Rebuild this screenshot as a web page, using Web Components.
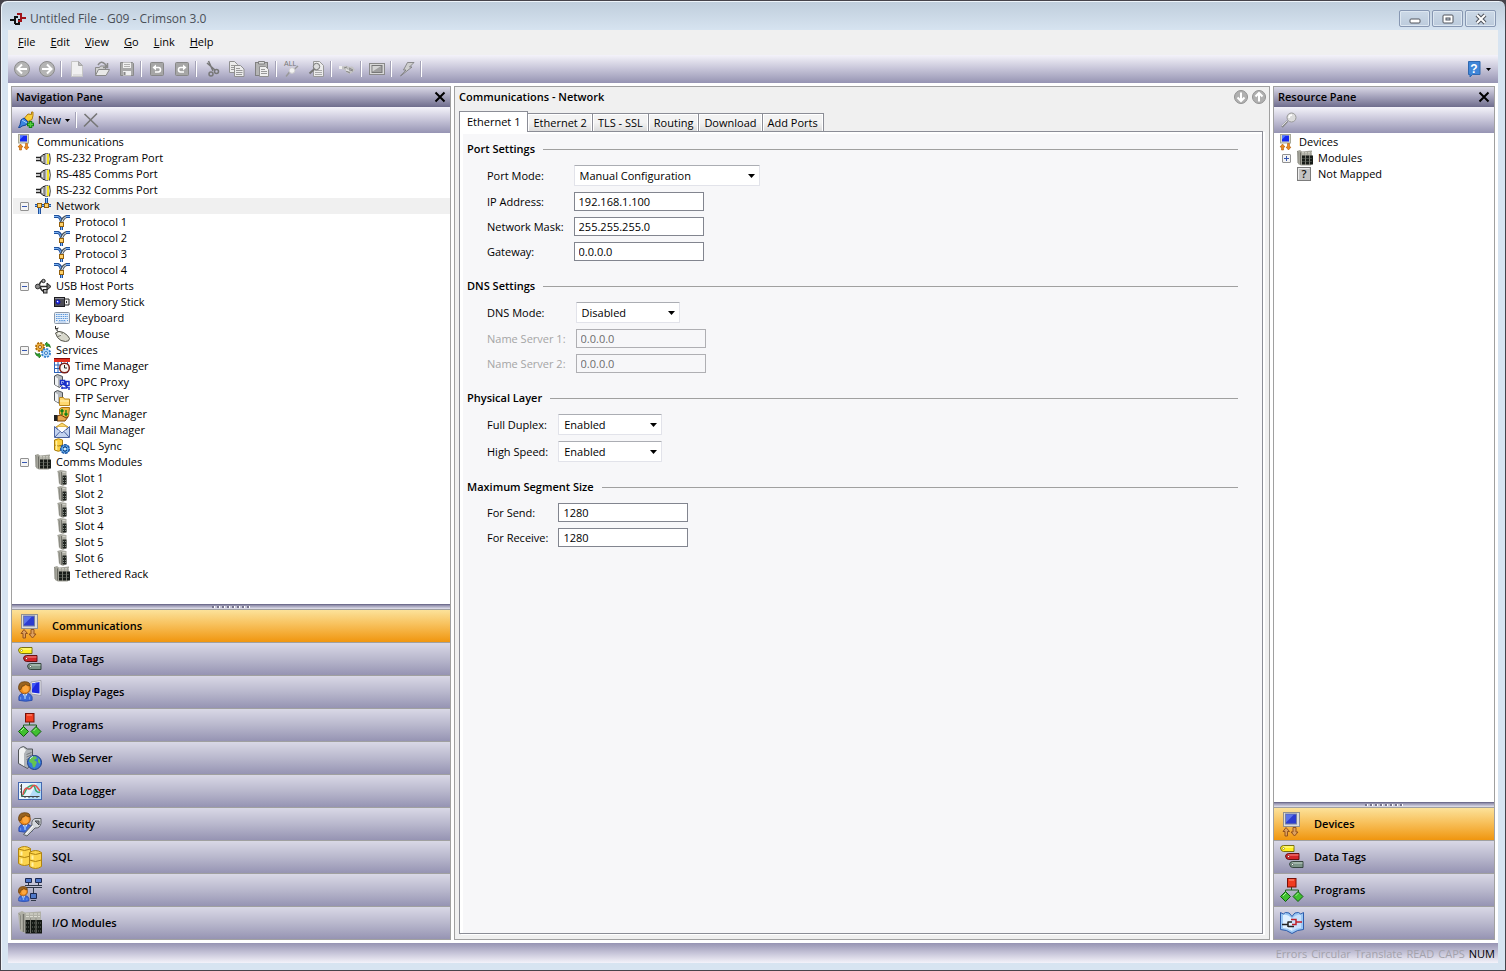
<!DOCTYPE html>
<html lang="en">
<head>
<meta charset="utf-8">
<title>Untitled File - G09 - Crimson 3.0</title>
<style>
  html, body {
    height: 100%;
  }
  body {
    margin: 0;
    background: #46434a;
    color: #000;
    font: 11px/16px "Open Sans", "Noto Sans", sans-serif;
    --edge: #a0a0a0;
    --bar: linear-gradient(#f4f3fa, #c6c4d8 50%, #9694b3);
    --category: linear-gradient(#d9d8e6, #b9b8cd 50%, #9694b3);
    --category-active: linear-gradient(#fce29a, #f7bd55 50%, #f0960f);
    --strong: 600;
  }
</style>
</head>
<body>
<app-window caption="Untitled File - G09 - Crimson 3.0">
  <menu-bar slot="menu">
    <menu-entry><u>F</u>ile</menu-entry>
    <menu-entry><u>E</u>dit</menu-entry>
    <menu-entry><u>V</u>iew</menu-entry>
    <menu-entry><u>G</u>o</menu-entry>
    <menu-entry><u>L</u>ink</menu-entry>
    <menu-entry><u>H</u>elp</menu-entry>
  </menu-bar>

  <tool-bar slot="toolbar">
    <tool-button icon="back" label="Back"></tool-button>
    <tool-button icon="forward" label="Forward"></tool-button>
    <tool-separator></tool-separator>
    <tool-button icon="new" label="New file"></tool-button>
    <tool-button icon="open" label="Open"></tool-button>
    <tool-button icon="save" label="Save"></tool-button>
    <tool-separator></tool-separator>
    <tool-button icon="undo" label="Undo"></tool-button>
    <tool-button icon="redo" label="Redo"></tool-button>
    <tool-separator></tool-separator>
    <tool-button icon="cut" label="Cut"></tool-button>
    <tool-button icon="copy" label="Copy"></tool-button>
    <tool-button icon="paste" label="Paste"></tool-button>
    <tool-separator></tool-separator>
    <tool-button icon="find-all" label="Find all"></tool-button>
    <tool-button icon="find-file" label="Find in file"></tool-button>
    <tool-separator></tool-separator>
    <tool-button icon="hand" label="Jump"></tool-button>
    <tool-separator></tool-separator>
    <tool-button icon="screen" label="Emulator"></tool-button>
    <tool-separator></tool-separator>
    <tool-button icon="bolt" label="Download"></tool-button>
    <tool-separator></tool-separator>
    <tool-button slot="end" icon="help" label="Help" drop></tool-button>
  </tool-bar>

  <side-pane slot="left" caption="Navigation Pane">
    <tool-button slot="tools" icon="plug" label="New item" drop>New</tool-button>
    <tool-separator slot="tools"></tool-separator>
    <tool-button slot="tools" icon="delete" label="Delete"></tool-button>

    <tree-node icon="comms">Communications</tree-node>
    <tree-node level="1" icon="port">RS-232 Program Port</tree-node>
    <tree-node level="1" icon="port">RS-485 Comms Port</tree-node>
    <tree-node level="1" icon="port">RS-232 Comms Port</tree-node>
    <tree-node level="1" icon="network" expander="minus" selected>Network</tree-node>
    <tree-node level="2" icon="protocol">Protocol 1</tree-node>
    <tree-node level="2" icon="protocol">Protocol 2</tree-node>
    <tree-node level="2" icon="protocol">Protocol 3</tree-node>
    <tree-node level="2" icon="protocol">Protocol 4</tree-node>
    <tree-node level="1" icon="usb" expander="minus">USB Host Ports</tree-node>
    <tree-node level="2" icon="stick">Memory Stick</tree-node>
    <tree-node level="2" icon="keyboard">Keyboard</tree-node>
    <tree-node level="2" icon="mouse">Mouse</tree-node>
    <tree-node level="1" icon="services" expander="minus">Services</tree-node>
    <tree-node level="2" icon="time">Time Manager</tree-node>
    <tree-node level="2" icon="opc">OPC Proxy</tree-node>
    <tree-node level="2" icon="ftp">FTP Server</tree-node>
    <tree-node level="2" icon="sync">Sync Manager</tree-node>
    <tree-node level="2" icon="mail">Mail Manager</tree-node>
    <tree-node level="2" icon="sql-sync">SQL Sync</tree-node>
    <tree-node level="1" icon="rack" expander="minus">Comms Modules</tree-node>
    <tree-node level="2" icon="module">Slot 1</tree-node>
    <tree-node level="2" icon="module">Slot 2</tree-node>
    <tree-node level="2" icon="module">Slot 3</tree-node>
    <tree-node level="2" icon="module">Slot 4</tree-node>
    <tree-node level="2" icon="module">Slot 5</tree-node>
    <tree-node level="2" icon="module">Slot 6</tree-node>
    <tree-node level="2" icon="rack">Tethered Rack</tree-node>

    <category-button slot="categories" icon="big-comms" active>Communications</category-button>
    <category-button slot="categories" icon="big-tags">Data Tags</category-button>
    <category-button slot="categories" icon="big-display">Display Pages</category-button>
    <category-button slot="categories" icon="big-programs">Programs</category-button>
    <category-button slot="categories" icon="big-web">Web Server</category-button>
    <category-button slot="categories" icon="big-logger">Data Logger</category-button>
    <category-button slot="categories" icon="big-security">Security</category-button>
    <category-button slot="categories" icon="big-sql">SQL</category-button>
    <category-button slot="categories" icon="big-control">Control</category-button>
    <category-button slot="categories" icon="big-rack">I/O Modules</category-button>
  </side-pane>

  <editor-pane slot="center" caption="Communications - Network">
    <editor-tab slot="tabs" active>Ethernet 1</editor-tab>
    <editor-tab slot="tabs">Ethernet 2</editor-tab>
    <editor-tab slot="tabs">TLS - SSL</editor-tab>
    <editor-tab slot="tabs">Routing</editor-tab>
    <editor-tab slot="tabs">Download</editor-tab>
    <editor-tab slot="tabs">Add Ports</editor-tab>

    <settings-group caption="Port Settings">
      <select-field label="Port Mode:" value="Manual Configuration" wide></select-field>
      <text-field label="IP Address:" value="192.168.1.100"></text-field>
      <text-field label="Network Mask:" value="255.255.255.0"></text-field>
      <text-field label="Gateway:" value="0.0.0.0"></text-field>
    </settings-group>
    <settings-group caption="DNS Settings">
      <select-field label="DNS Mode:" value="Disabled"></select-field>
      <text-field label="Name Server 1:" value="0.0.0.0" disabled></text-field>
      <text-field label="Name Server 2:" value="0.0.0.0" disabled></text-field>
    </settings-group>
    <settings-group caption="Physical Layer">
      <select-field label="Full Duplex:" value="Enabled"></select-field>
      <select-field label="High Speed:" value="Enabled"></select-field>
    </settings-group>
    <settings-group caption="Maximum Segment Size">
      <text-field label="For Send:" value="1280"></text-field>
      <text-field label="For Receive:" value="1280"></text-field>
    </settings-group>
  </editor-pane>

  <side-pane slot="right" caption="Resource Pane">
    <tool-button slot="tools" icon="search" label="Search"></tool-button>

    <tree-node icon="comms">Devices</tree-node>
    <tree-node level="1" icon="rack" expander="plus">Modules</tree-node>
    <tree-node level="1" icon="unknown">Not Mapped</tree-node>

    <category-button slot="categories" icon="big-comms" active>Devices</category-button>
    <category-button slot="categories" icon="big-tags">Data Tags</category-button>
    <category-button slot="categories" icon="big-programs">Programs</category-button>
    <category-button slot="categories" icon="big-system">System</category-button>
  </side-pane>

  <status-bar slot="status">
    <span>Errors</span>
    <span>Circular</span>
    <span>Translate</span>
    <span>READ</span>
    <span>CAPS</span>
    <span class="on">NUM</span>
  </status-bar>
</app-window>

<script>
(() => {
  const PERSON = `
    <path d="M1 22v-4q1-3 4-4h6q4 1 5 4v4q-7 2-15 0z" fill="#3c6ad8" stroke="#2748a8"/>
    <path d="M5 13.500l3 6 3-6z" fill="#e8f0ff"/><path d="M8 14.500v6" stroke="#80b0f0" stroke-width="2"/>
    <path d="M3 18v3M13 18v3" stroke="#7ca4f0"/>
    <circle cx="7.500" cy="8" r="6.500" fill="#f08c1c" stroke="#8a4a10"/><ellipse cx="8.500" cy="9" rx="3.500" ry="3.500" fill="#fca840"/>
    <path d="M1 9.500Q-.500 1 7 .800T13.500 5.500q-3 0-5-2-1 2.500-4 2.500-.500 2-1.500 4z" fill="#9a6420" stroke="#5e3a0c" stroke-width=".800"/>`;

  const TOWER = `
    <path d="M.500 4Q2 1 5.500.500l4 2.500h5v13l-5 6.500-9-5z" fill="#aeb2b6" stroke="#505458"/>
    <path d="M1 4.500Q2 1.500 5.500 1.500L8 4 6 8v12L1 17z" fill="#f0f1f2"/>
    <path d="M6 8l3-4h5v12l-5 5.500L6 20z" fill="#b0b4b8"/>
    <path d="M8.500 8.500l5-2M8.500 11l5-2M8.500 13.500l5-2" stroke="#74787c"/>`;

  const tag = (x, y, fill, edge, shine) => `
    <path d="M${x} ${y + 3}q.500-2.500 3-2.500h10.500v6H${x + 3}q-2.500 0-3-3.500z" fill="${fill}" stroke="${edge}" stroke-width=".900"/>
    <path d="M${x + 3} ${y + 2}h10" stroke="${shine}"/><circle cx="${x + 3}" cy="${y + 3.5}" r="1" fill="#fff" stroke="${edge}" stroke-width=".500"/>`;

  // small icons sit on a 16 unit grid, category icons on a 24 unit grid
  const ICONS = {
    'logo': `<path d="M0 9h5M5 13h4V8M5 13V6h3" stroke="#111" stroke-width="2"/>
      <path d="M7 3h4v7H8M11 7h5" stroke="#a11218" stroke-width="2"/>`,
    'back': `<circle cx="8" cy="8" r="7.500" fill="#b4b4b4" stroke="#8c8c8c"/>
      <path d="M13 8H4M8 3.500L3.500 8 8 12.500" stroke="#fff" stroke-width="2"/>`,
    'forward': `<circle cx="8" cy="8" r="7.500" fill="#b4b4b4" stroke="#8c8c8c"/>
      <path d="M3 8h9M8 3.500l4.500 4.500L8 12.500" stroke="#fff" stroke-width="2"/>`,
    'down': `<circle cx="8" cy="8" r="6.500" fill="#b0b0b0" stroke="#929292"/>
      <path d="M8 3.500v8M4.500 8.500L8 12l3.500-3.500" stroke="#fff" stroke-width="2"/>`,
    'up': `<circle cx="8" cy="8" r="6.500" fill="#b0b0b0" stroke="#929292"/>
      <path d="M8 12.500v-8M4.500 7.500L8 4l3.500 3.500" stroke="#fff" stroke-width="2"/>`,
    'new': `<path d="M2.500.500h7l4 4v11h-11z" fill="#f0f0f0" stroke="#c6c6c6"/>
      <path d="M9.500.500v4h4z" fill="#bdbdbd" stroke="#a8a8a8"/><path d="M4 14h9" stroke="#ccc"/>`,
    'open': `<path d="M1.500 14.500v-8h4l1-1.500h5v4" fill="#d0d0d0" stroke="#8a8a8a"/>
      <path d="M1.500 14.500l3-6h11l-3.500 6z" fill="#e8e8e8" stroke="#8a8a8a"/>
      <path d="M4 4q3-5 7-1l2 3M13.500 2v4.500H9" stroke="#8a8a8a" stroke-width="1.500"/>`,
    'save': `<path d="M1.500 1.500h12l1 1v12h-13z" fill="#a9a9a9" stroke="#8a8a8a"/>
      <path d="M4 1.500h8v5.500H4zM4 10h8v4.500H4z" fill="#f0f0f0"/>
      <path d="M5 3.500h6M5 5.500h6" stroke="#b0b0b0"/><path d="M5.500 11v3" stroke="#888" stroke-width="2"/>`,
    'undo': `<rect x="1.500" y="1.500" width="13" height="13" rx="1" fill="#a6a6a6" stroke="#888"/>
      <path d="M5 6.500h4.500q2 0 2 2.200T9.500 11H6" stroke="#fff" stroke-width="1.600"/>
      <path d="M3.500 6.500L7 3.500v6z" fill="#fff"/>`,
    'redo': `<rect x="1.500" y="1.500" width="13" height="13" rx="1" fill="#a6a6a6" stroke="#888"/>
      <path d="M11 6.500H6.500q-2 0-2 2.200T6.500 11H10" stroke="#fff" stroke-width="1.600"/>
      <path d="M12.500 6.500L9 3.500v6z" fill="#fff"/>`,
    'cut': `<path d="M4.500 0L9 10M3 2l8 7" stroke="#777" stroke-width="1.500"/>
      <circle cx="7" cy="13" r="2" stroke="#777" stroke-width="1.500"/>
      <circle cx="12.500" cy="10.500" r="2" stroke="#777" stroke-width="1.500"/>`,
    'copy': `<path d="M.500.500h5l3 3v8h-8z" fill="#ececec" stroke="#909090"/><path d="M2 4.500h4M2 6.500h4M2 8.500h4" stroke="#999"/>
      <path d="M5.500 4.500h6l3.500 3.500v7.500H5.500z" fill="#ececec" stroke="#909090"/><path d="M7 7.500h4M7 9.500h6.500M7 11.500h6.500M7 13.500h6" stroke="#999"/>`,
    'paste': `<rect x="1.500" y="1.500" width="12" height="13" fill="#b4b4b4" stroke="#808080"/>
      <path d="M4.500 3V.500h6V3z" fill="#ddd" stroke="#808080"/>
      <path d="M5.500 5.500h6l3 3v7h-9z" fill="#efefef" stroke="#909090"/><path d="M7 8.500h4M7 10.500h6M7 12.500h6" stroke="#999"/>`,
    'find-all': `<text x="0" y="5" font-size="7" font-family="Liberation Sans, sans-serif" fill="#777">ALL</text>
      <path d="M14 5l-4.500 4M2 15.500l4-5" stroke="#999" stroke-width="1.500"/><circle cx="8" cy="9.500" r="2.800" fill="#f2f2f2" stroke="#d0d0d0"/>`,
    'find-file': `<path d="M4.500.500h6l4 4v11h-10z" fill="#ececec" stroke="#999"/><path d="M6 9.500h7M6 11.500h7M6 13.500h7" stroke="#aaa"/>
      <circle cx="7.500" cy="5.500" r="3.200" fill="#ddd" stroke="#777"/><path d="M5.500 8L.500 12.500" stroke="#777" stroke-width="2"/>`,
    'hand': `<path d="M0 5l4 .500Q7 4 10 6q3-1 4 0l2 3-2 2-3 2-3-1-2-3-4-1-2-2z" fill="#c4c4c4"/>
      <path d="M0 5h3v3H0z" fill="#f0f0f0"/><path d="M5 7l3-1M8 8l6 2M7 10l4 2M10 7l4 2" stroke="#868686"/><path d="M7 9h3" stroke="#fff"/>`,
    'screen': `<rect x=".500" y="2.500" width="15" height="11" fill="#d8d8d8" stroke="#8a8a8a"/>
      <rect x="3" y="4.500" width="10" height="7" fill="#a0a0a0" stroke="#777"/><path d="M3.500 10.500L12 5H3.500z" fill="#d4d4d4"/>`,
    'bolt': `<path d="M8.500 1.500h6.500l-4.500 4.500H13L1.500 15 7 9H4.500z" fill="#cfcfcf" stroke="#777" stroke-width=".800"/>`,
    'help': `<path d="M3 .500h11v13H6.500L4 16v-2.500H2.500V.500z" fill="#3f86d8" stroke="#2f68b0"/>
      <text x="8" y="12" text-anchor="middle" font-size="12" font-weight="700" font-family="Liberation Sans, sans-serif" fill="#fff">?</text>`,
    'plug': `<path d="M6.500 6l3.500-4 3.500.500V0H15v3.500l-1 4-4 2z" fill="#f8cf3a" stroke="#b07a10"/>
      <path d="M2 13l1-5 3-2 4 4-2 3-4 1-2 1.500H.500z" fill="#3c86e0" stroke="#14459a"/>
      <path d="M4 8l5 3" stroke="#a6d0ff"/><path d="M12.500 9v7M9 12.500h7" stroke="#128012" stroke-width="3.500"/><path d="M12.500 10v5M10 12.500h5" stroke="#55d040" stroke-width="1.500"/>`,
    'delete': `<path d="M1.500 2l13.500 13M14 1.500L1 14.500" stroke="#777" stroke-width="1.600"/>`,
    'search': `<path d="M1 15l5.500-6" stroke="#8a8a8a" stroke-width="2"/><path d="M1 14l5-5" stroke="#ddd"/>
      <circle cx="10.500" cy="5.500" r="4.500" fill="#dcdcdc" stroke="#999"/><path d="M8 6q0-3 3-3" stroke="#fff" stroke-width="1.500"/>`,
    'comms': `<rect x="2.500" y=".500" width="10" height="8.500" fill="#d8d8c8" stroke="#a8a898"/>
      <rect x="4" y="1.500" width="7" height="6" fill="#1428f0"/><path d="M4 1.500h4l-4 4z" fill="#5078ff"/>
      <path d="M4.500 10L2 13h1.500v3h2v-3H7zM10.500 16L8 13h1.500v-3.500h2V13H13z" fill="#f08a1c" stroke="#b05a08" stroke-width=".600"/>`,
    'port': `<path d="M1 7.500h5M1 10.500h5" stroke="#222" stroke-width="1.500"/>
      <path d="M5.500 7L8 4.500h2.500v9H8L5.500 11z" fill="#a0a0a0" stroke="#222"/><path d="M7.500 7v4" stroke="#eee"/>
      <rect x="10" y="3.500" width="3" height="11" fill="#d4d4d4" stroke="#555" stroke-width=".700"/>
      <path d="M13 4v10" stroke="#f4e420" stroke-width="2"/><path d="M14.500 3.500q1.500 5.500 0 11" stroke="#333"/>`,
    'network': `<path d="M0 7.500h16M4.500 8v8M11.500 0v7" stroke="#1e4f9c" stroke-width="3"/>
      <path d="M0 7.500h16M4.500 8v8M11.500 0v7" stroke="#7fb6f4"/>
      <rect x="2.500" y="5.500" width="4" height="4" fill="#ffd26a" stroke="#94600c"/><rect x="9.500" y="5.500" width="4" height="4" fill="#ffd26a" stroke="#94600c"/>`,
    'protocol': `<path d="M0 2.500h4q3 1 3.500 6" stroke="#1e4f9c" stroke-width="3"/><path d="M0 2.500h4q3 1 3.500 6" stroke="#7fb6f4"/>
      <path d="M16 2.500h-3.500Q9 3.500 7.500 8.500" stroke="#4a545e" stroke-width="3"/><path d="M16 2.500h-3.500Q9 3.500 7.500 8.500" stroke="#dfe8ee"/>
      <path d="M12 2.500h4" stroke="#1e4f9c" stroke-width="3"/><path d="M12 2.500h4" stroke="#7fb6f4"/>
      <path d="M7.500 12v4" stroke="#1e4f9c" stroke-width="3"/><path d="M7.500 12v4" stroke="#7fb6f4"/>
      <rect x="5.500" y="8.500" width="4" height="4" fill="#ffd26a" stroke="#94600c"/>`,
    'usb': `<path d="M2 8.500h11M4 8q1-5 4-5M5 9q2 5 5 4" stroke="#2c2c2c" stroke-width="1.700"/>
      <path d="M12 5l4 3.500-4 3.500z" fill="#777" stroke="#222"/><circle cx="2.800" cy="8.500" r="2.400" fill="#8a8a8a" stroke="#333"/>
      <circle cx="8.500" cy="3" r="1.700" fill="#aaa" stroke="#222"/><rect x="8.500" y="11.500" width="3.500" height="3.500" fill="#aaa" stroke="#222"/>`,
    'stick': `<rect x=".500" y="3.500" width="10" height="9" fill="#4c4c54" stroke="#1c1c20"/><path d="M1 4.500h9" stroke="#8a8a92"/>
      <circle cx="4" cy="8" r="2" fill="#3344ff" stroke="#1010a0"/><circle cx="3.500" cy="7.500" r=".700" fill="#fff"/>
      <path d="M10.500 5h4.500v6h-4.500z" fill="#f0f0f0" stroke="#222"/><path d="M12.500 7v2" stroke="#333"/>`,
    'keyboard': `<rect x=".500" y="2.500" width="15" height="11" rx="1" fill="#e4eefa" stroke="#8c98a8"/>
      <path d="M2 4.500h12M2 6.500h12M2 8.500h12M2 10.500h2M5 10.500h7M13 10.500h1" stroke="#5c98dc" stroke-dasharray="1.500 .750"/><path d="M4 12h8" stroke="#a8c4e8"/>`,
    'mouse': `<path d="M1.500 0v3l3-1M3 2v3l3 1" stroke="#333"/>
      <path d="M1.500 7q3-3 8-.500 5 3 6 6 0 3-4 3-5 0-8-4z" fill="#d8d8cc" stroke="#55554c"/><path d="M3 11q5-1 6-5" stroke="#77776c"/><path d="M4 7l4 2" stroke="#fff"/>`,
    'services': `<circle cx="5" cy="5" r="4" fill="#f0b040" stroke="#b06c08" stroke-dasharray="2 1.100" stroke-width="2"/><circle cx="5" cy="5" r="3" fill="#f0b040"/><circle cx="5" cy="5" r="1.500" fill="#fff" stroke="#a06008"/>
      <circle cx="11" cy="11" r="4" fill="#b4dcfc" stroke="#3a84d0" stroke-dasharray="2 1.100" stroke-width="2"/><circle cx="11" cy="11" r="3" fill="#b4dcfc"/><circle cx="11" cy="11" r="1.500" fill="#fff" stroke="#3a7cc4"/>
      <path d="M10 2l2-2v1.500q3 0 3.500 4-2-2-3.500-1.500V5zM6 14l-2 2v-1.500q-3 0-4-4 2 2 4 1.500V11z" fill="#30a830" stroke="#106010" stroke-width=".600"/>`,
    'time': `<rect x=".500" y="3.500" width="13" height="11" fill="#fff" stroke="#2a62b8"/><path d="M1 7h12M1 10.500h12M4 4v10M7.500 4v10" stroke="#2a62b8"/>
      <rect x="0" y="0" width="16" height="4" fill="#e03020"/><path d="M0 .500h16" stroke="#8a0c08"/>
      <circle cx="10.500" cy="10" r="4.800" fill="#f8f4f0" stroke="#7c1c14" stroke-width="1.500"/><path d="M10.500 7v3h2.500" stroke="#222"/>`,
    'opc': `<path d="M.500 2l3-1.500 5 2v8l-3 3-5-3z" fill="#b4b8bc" stroke="#505458"/><path d="M1 2.500l3 2v8L1 10.500z" fill="#f0f2f4"/>
      <path d="M6.500 6.500h4v4h-4zM12 7.500h3v4h-3zM8 12.500v2.500M15 13v3" fill="#fff" stroke="#1830c8" stroke-width="1.500"/><path d="M8 8l6 6M8 14h5" stroke="#1830c8" stroke-width="1.500"/>`,
    'ftp': `<path d="M.500 2l3-1.500 5 2v8l-3 3-5-3z" fill="#b4b8bc" stroke="#505458"/><path d="M1 2.500l3 2v8L1 10.500z" fill="#f0f2f4"/>
      <path d="M5.500 15.500v-8h4l1 1.500h5v6.500z" fill="#ffd870" stroke="#b8861c"/><path d="M6 11h9" stroke="#fff0b8"/>`,
    'sync': `<path d="M5.500 8V3l2-1.500h8l-1 9-5 1.500z" fill="#f0b840" stroke="#a87010"/><path d="M8 9V4M6.500 5.500L8 3.500l1.500 2M12 4v5M10.500 7.500l1.500 2 1.500-2" stroke="#108018" stroke-width="1.300"/>
      <path d="M3 10l4-1 5 3 2-1-3 4H3z" fill="#e8a850" stroke="#7a4008"/><rect x="0" y="9" width="3.500" height="6" fill="#222"/>`,
    'mail': `<path d="M2 5h12L8 1z" fill="#fbd870" stroke="#c89c30"/><path d="M.500 4.500v11h15v-11l-4 4H5z" fill="#c4d4f0" stroke="#4c64a0"/>
      <path d="M4 5h8v4l-4 2-4-2z" fill="#fff"/><path d="M1 5l7 6 7-6M1 15l5-5.500M15 15l-5-5.500" stroke="#4c64a0"/>`,
    'sql-sync': `<path d="M.500 2v10q3.500 2.500 8 0V2q-4-2.500-8 0z" fill="#fbd040" stroke="#a87c10"/><path d="M.500 7q4 2 8 0" stroke="#a87c10"/><path d="M2.500 3v9" stroke="#fff0a0" stroke-width="1.500"/>
      <circle cx="11" cy="11" r="4.300" fill="#60a8e8" stroke="#1c58a8" stroke-dasharray="3 .700" stroke-width="1.500"/><path d="M9 10q2-3 4 0M13 12q-2 3-4 0" stroke="#08306c"/><circle cx="11" cy="11" r="1" fill="#fff"/>`,
    'rack': `<path d="M0 1l3-1 2 1.500 10-1V14l-1.500 1.500H4L1 14z" fill="#a4a49a"/><path d="M3.500 2.500v12" stroke="#6c6c64"/><path d="M0 1l1 1v11" stroke="#8c8c84"/>
      <path d="M5 2.500h10M5 4h10" stroke="#c8c8be" stroke-dasharray="2 1"/><rect x="5" y="5.500" width="11" height="9" fill="#181c18"/>
      <path d="M8.500 5v10M12.500 5v10" stroke="#94948a" stroke-width=".800"/><path d="M5.500 8.500h10M5.500 11.500h10" stroke="#6c746c" stroke-dasharray="1 1"/>`,
    'module': `<path d="M3.500 1l3-1 6 1v13L9 16l-4-2z" fill="#acaca2"/><path d="M7.500 2v13" stroke="#74746c"/><path d="M4 1.500L5.500 3v10" stroke="#8c8c84"/>
      <path d="M8.500 2.500h3" stroke="#d0d0c8"/><rect x="8.500" y="5.500" width="4" height="9" fill="#202420"/><path d="M9 7.500h3M9 10.500h3M9 12.500h3" stroke="#808880" stroke-dasharray="1 1"/>`,
    'unknown': `<rect x=".500" y="1.500" width="13" height="13" fill="#c4c4c4" stroke="#7c7c7c"/><path d="M1.500 13.500v-11h11" stroke="#eee"/>
      <text x="7" y="12" text-anchor="middle" font-size="11" font-weight="600" fill="#111">?</text>`,

    'big-comms': `<rect x="3.500" y=".500" width="16" height="14" fill="#dcdcdc" stroke="#909090"/><rect x="5.500" y="2" width="11" height="10" fill="#2c3cd0" stroke="#7880a0"/>
      <path d="M6 2.500h8l-8 8z" fill="#5c74e8"/><path d="M6 15.500l-3 4h2v4.500h2.500v-4.500h2zM14.500 24l3.500-4h-2v-4.500h-3V20h-2z" fill="#dca060" stroke="#94521c"/>`,
    'big-tags': `${tag(.5, 0, '#fff020', '#6c6400', '#fffcb0')}${tag(5.5, 8, '#d42428', '#5c0808', '#f88c88')}${tag(9.5, 16, '#7c9488', '#2c3c34', '#c4d4cc')}`,
    'big-display': `<path d="M13 2l10-1.500v15L13 14z" fill="#f0f0f4" stroke="#a0a0ac"/><path d="M14 3.500l7.500-1.500v11.500L14 12.500z" fill="#1c28e0"/><path d="M14 3.500l5-1-5 7z" fill="#4058f4"/>
      <g transform="translate(0 1) scale(.88)">${PERSON}</g>`,
    'big-programs': `<path d="M11.500 9v3M5.500 15v-3h13v3" stroke="#206020"/><rect x="7.500" y=".500" width="8.500" height="8.500" fill="#f03c20" stroke="#781008"/><path d="M9 2h5" stroke="#ff9880"/>
      <path d="M5.500 13.500l5 5-5 5-5-5zM18 13.500l5 5-5 5-5-5z" fill="#40c030" stroke="#105c10"/><path d="M3 18l3-3M15.500 18l3-3" stroke="#a8f098"/>`,
    'big-web': `${TOWER}<circle cx="16.500" cy="16.500" r="7" fill="#3878d8" stroke="#1c3c84"/>
      <path d="M12 12q3-2.500 6-1.500l1 2-3 1.500 3 2-2 5-2 .500-1-4-3-2zM20 12l2 2v4l-2-2z" fill="#64c450"/><path d="M12 13q1-2 3-2.500" stroke="#d8f0ff"/>`,
    'big-logger': `<rect x=".500" y="3.500" width="23" height="17" fill="#e8f4fc" stroke="#4468b0"/><path d="M10 20L19 4h4v16z" fill="#b4dcf8"/>
      <path d="M3.500 5v12.500h18M2 7h2M2 10h2M2 13h2M7 17v2M11 17v2M15 17v2M19 17v2" stroke="#444"/>
      <path d="M4 17q3-3 4-6 1-3 4-4 4-2 5 2 1 5 5 4" stroke="#38a870" stroke-width="1.500"/><path d="M5 16q1-7 4-7 2 2 4 0 3-5 6-1l3 4" stroke="#e05048" stroke-width="1.500"/>`,
    'big-security': `<g transform="scale(.88)">${PERSON}</g><path d="M5.500 22.500L14 13q-1-5 3-6.500h6v5q-1 5-6 4.500l-8 8z" fill="#d4d8dc" stroke="#5c6064"/>
      <path d="M17 9h4v4z" fill="#8c9094" stroke="#44484c"/><path d="M8 22l7-8" stroke="#fff"/>`,
    'big-sql': `<path d="M.500 3.500q6-4 12 0v15q-6 4-12 0z" fill="#fcd44c" stroke="#b08410"/><path d="M.500 4q6 3 12 0M.500 11q6 3 12 0" stroke="#b08410"/>
      <path d="M3.500 6.500v4M3.500 13.500v5" stroke="#fff2a8" stroke-width="2"/>
      <path d="M11.500 7.500q6-4 12 0v14q-6 4-12 0z" fill="#fcd44c" stroke="#b08410"/><path d="M11.500 8q6 3 12 0M11.500 15q6 3 12 0" stroke="#b08410"/>
      <path d="M14.500 10.500v4M14.500 17.500v4" stroke="#fff2a8" stroke-width="2"/>`,
    'big-control': `<path d="M10.500 5v3M20.500 5v3M7 7.500h17M7 9.500h17M15.500 9v6M12 19.500h7" stroke="#303848"/>
      <path d="M7.500.500h6v4h-6zM17.500.500h6v4h-6zM12.500 15.500h6v5h-6z" fill="#5078c8" stroke="#1c2850"/><path d="M13 22.500h5" stroke="#303848"/>
      <g transform="translate(0 8) scale(.68)">${PERSON}</g>`,
    'big-rack': `<path d="M0 2l4-2 3 1.500L23 .500V20l-1 2H7l-5-2z" fill="#b0b0a6"/><path d="M5.500 3v18" stroke="#74746c" stroke-width="1.500"/><path d="M1 2.500l1.500 2v14" stroke="#8c8c84"/>
      <path d="M8 3h14M8 5.500h14" stroke="#dcdcd2" stroke-dasharray="3 1"/><rect x="7.500" y="9" width="16.500" height="13.500" fill="#141814"/>
      <path d="M12.500 7v15M18 7v15" stroke="#8c8c82" stroke-width=".800"/><path d="M8 12h16M8 16h16M8 20h16" stroke="#687068" stroke-dasharray="1 1"/>`,
    'big-system': `<path d="M.500 1.500q3 3 5 0 4-1 6.500 4 2.500-5 6.500-4 2 3 5 0v17q-6 0-11.500 4-5.500-4-11.500-4z" fill="#9cc8f4" stroke="#2c5cac"/>
      <path d="M3 4q5-1 9 4v12q-4-3-9-3z" fill="#e0f0ff"/><path d="M12 8q4-5 9-4v13q-5 0-9 3z" fill="#c8e0fc"/>
      <path d="M2 13.500h6M8 11h4M8 15.500h6M8 10.500v5.500" stroke="#222" stroke-width="1.500"/><path d="M11 8.500h5v5h-4M16 11h6" stroke="#c02028" stroke-width="1.500"/>`,
  };

  const drawIcon = (name) => {
    const units = name.startsWith('big-') ? 24 : 16;
    return `<svg width="${units}" height="${units}" viewBox="0 0 ${units} ${units}" fill="none" aria-hidden="true">${ICONS[name]}</svg>`;
  };

  const ARROW = '<svg class="arrow" width="7" height="4" viewBox="0 0 7 4" aria-hidden="true"><path d="M0 0h7L3.500 4z"/></svg>';
  const CLOSE = '<svg width="12" height="12" viewBox="0 0 12 12" aria-hidden="true"><path d="M1.500 1.500l9 9M10.500 1.500l-9 9" stroke="#000" stroke-width="2"/></svg>';

  const BASE = `
    *, *::after, *::before {
      box-sizing: border-box;
    }
    :host {
      box-sizing: border-box;
    }
    svg {
      display: block;
      flex: none;
      overflow: visible;
    }
    button, input, select {
      font: inherit;
      color: inherit;
      margin: 0;
    }
    h1, h2 {
      font: inherit;
      margin: 0;
    }
  `;

  class BaseElement extends HTMLElement {
    constructor() {
      super();
      this.attachShadow({ mode: 'open' });
    }

    connectedCallback() {
      this.shadowRoot.innerHTML = `<style>${BASE}${this.styles()}</style>${this.markup()}`;
    }

    attr(name) {
      return this.getAttribute(name) || '';
    }
  }

  class AppWindow extends BaseElement {
    styles() {
      return `
        :host {
          display: flex;
          flex-direction: column;
          height: 100vh;
          min-height: 760px;
          padding: 0 7px 7px;
          border: 1px solid #46434a;
          border-radius: 7px 7px 0 0;
          background: linear-gradient(#bfcddb, #d7e4f1 30px);
          box-shadow: inset 1px 1px #eef4fa;
        }
        header {
          display: flex;
          align-items: center;
          height: 29px;
          padding: 6px 2px 0;
          flex: none;
        }
        h1 {
          flex: 1;
          margin-left: 4px;
          color: #4a5058;
          font-size: 12px;
        }
        .controls {
          display: flex;
          gap: 2px;
        }
        .controls button {
          display: grid;
          place-items: center;
          width: 31px;
          height: 17px;
          padding: 0;
          border: 1px solid #8797b2;
          border-radius: 2px;
          background: linear-gradient(#ccd9e7, #bccbdc);
          box-shadow: inset 0 0 0 1px #dde7f1;
        }
        .client {
          flex: 1;
          display: flex;
          flex-direction: column;
          min-height: 0;
          background: #fff;
        }
        main {
          flex: 1;
          display: grid;
          grid-template-columns: 440px minmax(0, 1fr) 222px;
          gap: 3px;
          min-height: 0;
          padding: 3px;
        }
      `;
    }

    markup() {
      return `
        <header>
          ${drawIcon('logo')}
          <h1>${this.attr('caption')}</h1>
          <div class="controls">
            <button aria-label="Minimize"><svg width="12" height="10"><rect x="1" y="5" width="10" height="4" rx="1" fill="#fff" stroke="#50545c"/></svg></button>
            <button aria-label="Restore"><svg width="12" height="10"><rect x="1" y="1" width="10" height="8" rx="1" fill="#fff" stroke="#50545c"/><rect x="4" y="4" width="4" height="2" fill="#c4d0de" stroke="#50545c"/></svg></button>
            <button aria-label="Close"><svg width="12" height="10"><path d="M2 1l8 8M10 1L2 9" stroke="#50545c" stroke-width="4"/><path d="M2 1l8 8M10 1L2 9" stroke="#fff" stroke-width="2"/></svg></button>
          </div>
        </header>
        <div class="client">
          <slot name="menu"></slot>
          <slot name="toolbar"></slot>
          <main>
            <slot name="left"></slot>
            <slot name="center"></slot>
            <slot name="right"></slot>
          </main>
          <slot name="status"></slot>
        </div>
      `;
    }
  }

  class MenuBar extends BaseElement {
    styles() {
      return `
        :host {
          display: flex;
          align-items: center;
          gap: 1px;
          height: 25px;
          padding: 0 3px 2px;
          background: #f0f0f0;
        }
      `;
    }

    markup() {
      return '<slot></slot>';
    }
  }

  class MenuEntry extends BaseElement {
    styles() {
      return `
        :host {
          display: block;
        }
        button {
          padding: 0 7px;
          border: 0;
          background: none;
        }
      `;
    }

    markup() {
      return '<button><slot></slot></button>';
    }
  }

  class ToolBar extends BaseElement {
    styles() {
      return `
        :host {
          display: flex;
          align-items: center;
          height: 28px;
          padding: 0 3px 0 1px;
          background: var(--bar);
        }
        .fill {
          flex: 1;
        }
      `;
    }

    markup() {
      return '<slot></slot><div class="fill"></div><slot name="end"></slot>';
    }
  }

  class ToolButton extends BaseElement {
    styles() {
      return `
        :host {
          display: block;
        }
        button {
          display: flex;
          align-items: center;
          justify-content: center;
          gap: 4px;
          min-width: 25px;
          height: 22px;
          padding: 0 4px;
          border: 0;
          background: none;
        }
        .arrow {
          width: 5px;
          height: 3px;
        }
      `;
    }

    markup() {
      return `
        <button aria-label="${this.attr('label')}">
          ${drawIcon(this.attr('icon'))}
          ${this.textContent ? '<slot></slot>' : ''}
          ${this.hasAttribute('drop') ? ARROW : ''}
        </button>
      `;
    }
  }

  class ToolSeparator extends BaseElement {
    styles() {
      return `
        :host {
          display: block;
          width: 1px;
          height: 16px;
          margin: 0 2px;
          background: #fff;
          box-shadow: -1px 0 #a5a3b8;
        }
      `;
    }

    markup() {
      return '';
    }
  }

  class SidePane extends BaseElement {
    styles() {
      return `
        :host {
          display: flex;
          flex-direction: column;
          min-height: 0;
          border: 1px solid var(--edge);
          border-bottom: 0;
        }
        header {
          display: flex;
          align-items: center;
          justify-content: space-between;
          height: 20px;
          padding: 0 4px;
          background: linear-gradient(#d9d8e6, #a3a1ba 50%, #6f6d8d);
          font-weight: var(--strong);
        }
        header button {
          padding: 0;
          border: 0;
          background: none;
        }
        .tools {
          display: flex;
          align-items: center;
          height: 26px;
          padding: 0 2px;
          background: var(--bar);
        }
        .tree {
          flex: 1;
          min-height: 0;
          overflow: hidden;
          padding: 1px 0 0 1px;
          background: #fff;
        }
        .splitter {
          display: grid;
          place-items: center;
          height: 6px;
          border-top: 1px solid #6f6d8d;
          border-bottom: 1px solid var(--edge);
          background: linear-gradient(#8a88a6, #e4e3ee);
        }
        .splitter::after {
          content: '';
          width: 38px;
          height: 2px;
          background: repeating-linear-gradient(90deg, #77758f 0 2px, #fff 2px 3px, #c4c3d4 3px 5px);
        }
      `;
    }

    markup() {
      return `
        <header>
          <h2>${this.attr('caption')}</h2>
          <button aria-label="Close pane">${CLOSE}</button>
        </header>
        <div class="tools"><slot name="tools"></slot></div>
        <div class="tree" role="tree"><slot></slot></div>
        <div class="splitter"></div>
        <nav><slot name="categories"></slot></nav>
      `;
    }
  }

  class TreeNode extends BaseElement {
    styles() {
      return `
        :host {
          display: flex;
          align-items: center;
          height: 16px;
          padding-left: 3px;
          white-space: nowrap;
        }
        :host([level="2"]) {
          padding-left: 22px;
        }
        :host([selected]) {
          background: #f0f0f0;
        }
        .lead {
          width: 19px;
          padding-left: 4px;
        }
        .lead button {
          display: block;
          width: 9px;
          height: 9px;
          padding: 0;
          border: 1px solid #919191;
          border-radius: 1px;
          background: #f4f4f4;
        }
        .label {
          margin-left: 5px;
        }
      `;
    }

    markup() {
      const expander = this.attr('expander');
      const sign = expander === 'plus' ? 'M1 3.500h5M3.500 1v5' : 'M1 3.500h5';
      const box = expander
        ? `<button aria-label="Toggle"><svg width="7" height="7"><path d="${sign}" stroke="#3858b0"/></svg></button>`
        : '';
      return `
        ${this.hasAttribute('level') ? `<div class="lead">${box}</div>` : ''}
        ${drawIcon(this.attr('icon'))}
        <span class="label" role="treeitem"><slot></slot></span>
      `;
    }
  }

  class CategoryButton extends BaseElement {
    styles() {
      return `
        :host {
          display: block;
        }
        button {
          display: flex;
          align-items: center;
          gap: 10px;
          width: 100%;
          height: 33px;
          padding: 0 6px;
          border: 0;
          border-bottom: 1px solid var(--edge);
          background: var(--category);
          font-weight: var(--strong);
          text-align: left;
        }
        :host([active]) button {
          background: var(--category-active);
        }
      `;
    }

    markup() {
      return `<button>${drawIcon(this.attr('icon'))}<slot></slot></button>`;
    }
  }

  class EditorPane extends BaseElement {
    styles() {
      return `
        :host {
          display: flex;
          flex-direction: column;
          min-height: 0;
          padding: 0 6px 5px 4px;
          border: 1px solid var(--edge);
          background: #f0f0f0;
        }
        header {
          display: flex;
          align-items: center;
          gap: 2px;
          height: 20px;
          margin-right: -4px;
          font-weight: var(--strong);
        }
        header h2 {
          flex: 1;
        }
        header button {
          padding: 0;
          border: 0;
          background: none;
        }
        .tabs {
          display: flex;
          align-items: flex-end;
          height: 25px;
          margin-bottom: -1px;
          z-index: 1;
        }
        .page {
          flex: 1;
          display: flex;
          flex-direction: column;
          gap: 17px;
          min-height: 0;
          padding: 9px 24px 0 7px;
          border: 1px solid #8b8d96;
          background: #f7f7f9;
          box-shadow: inset 3px 2px #fff, 2px 1px #fff;
        }
      `;
    }

    markup() {
      return `
        <header>
          <h2>${this.attr('caption')}</h2>
          <button aria-label="Next">${drawIcon('down')}</button>
          <button aria-label="Previous">${drawIcon('up')}</button>
        </header>
        <div class="tabs" role="tablist"><slot name="tabs"></slot></div>
        <div class="page"><slot></slot></div>
      `;
    }
  }

  class EditorTab extends BaseElement {
    styles() {
      return `
        :host {
          display: block;
        }
        button {
          display: block;
          height: 19px;
          padding: 0 5px;
          border: 1px solid #8b8d96;
          border-left: 0;
          background: linear-gradient(#f3f3f3 50%, #dcdcdc);
          box-shadow: inset 1px 1px #fff, inset -1px 0 #fff;
        }
        :host([active]) button {
          height: 21px;
          padding: 0 7px 1px;
          border-left: 1px solid #8b8d96;
          border-bottom: 0;
          background: #fff;
        }
      `;
    }

    markup() {
      return `<button role="tab" aria-selected="${this.hasAttribute('active')}"><slot></slot></button>`;
    }
  }

  class SettingsGroup extends BaseElement {
    styles() {
      return `
        :host {
          display: block;
        }
        h2 {
          display: flex;
          align-items: center;
          gap: 8px;
          margin-bottom: 8px;
          font-weight: var(--strong);
        }
        h2::after {
          content: '';
          flex: 1;
          height: 1px;
          background: #a0a0a0;
        }
        .fields {
          display: grid;
          grid-template-columns: max-content max-content;
          gap: 6px 10px;
          align-items: center;
          justify-items: start;
          padding-left: 20px;
        }
      `;
    }

    markup() {
      return `<h2>${this.attr('caption')}</h2><div class="fields"><slot></slot></div>`;
    }
  }

  class TextField extends BaseElement {
    styles() {
      return `
        :host {
          display: contents;
        }
        input {
          width: 130px;
          height: 19px;
          padding: 0 4px;
          border: 1px solid #82858f;
          border-radius: 0;
          background: #fff;
        }
        :host([disabled]) label {
          color: #a5a5a5;
        }
        input:disabled {
          border-color: #afafb3;
          background: #f7f7f9;
          color: #6d6d6d;
        }
      `;
    }

    markup() {
      return `
        <label for="field">${this.attr('label')}</label>
        <input id="field" type="text" value="${this.attr('value')}" ${this.hasAttribute('disabled') ? 'disabled' : ''}>
      `;
    }
  }

  class SelectField extends BaseElement {
    styles() {
      return `
        :host {
          display: contents;
        }
        .box {
          display: grid;
          align-items: center;
          width: 104px;
        }
        :host([wide]) .box {
          width: 186px;
        }
        select, .arrow {
          grid-area: 1 / 1;
        }
        select {
          appearance: none;
          width: 100%;
          height: 21px;
          padding: 0 18px 0 5px;
          border: 1px solid #e2e3ea;
          border-top-color: #abadb3;
          border-radius: 1px;
          background: #fff;
        }
        .arrow {
          justify-self: end;
          margin-right: 5px;
          pointer-events: none;
        }
      `;
    }

    markup() {
      return `
        <label for="field">${this.attr('label')}</label>
        <div class="box">
          <select id="field"><option>${this.attr('value')}</option></select>
          ${ARROW}
        </div>
      `;
    }
  }

  class StatusBar extends BaseElement {
    styles() {
      return `
        :host {
          display: flex;
          align-items: center;
          justify-content: flex-end;
          gap: 4px;
          height: 20px;
          padding: 2px 3px 0;
          background: linear-gradient(#9694b3, #c6c4d8 50%, #f4f3fa);
          color: #a3a2ac;
        }
        ::slotted(.on) {
          color: #000;
        }
      `;
    }

    markup() {
      return '<slot></slot>';
    }
  }

  window.customElements.define('app-window', AppWindow);
  window.customElements.define('menu-bar', MenuBar);
  window.customElements.define('menu-entry', MenuEntry);
  window.customElements.define('tool-bar', ToolBar);
  window.customElements.define('tool-button', ToolButton);
  window.customElements.define('tool-separator', ToolSeparator);
  window.customElements.define('side-pane', SidePane);
  window.customElements.define('tree-node', TreeNode);
  window.customElements.define('category-button', CategoryButton);
  window.customElements.define('editor-pane', EditorPane);
  window.customElements.define('editor-tab', EditorTab);
  window.customElements.define('settings-group', SettingsGroup);
  window.customElements.define('text-field', TextField);
  window.customElements.define('select-field', SelectField);
  window.customElements.define('status-bar', StatusBar);
})();
</script>
</body>
</html>
